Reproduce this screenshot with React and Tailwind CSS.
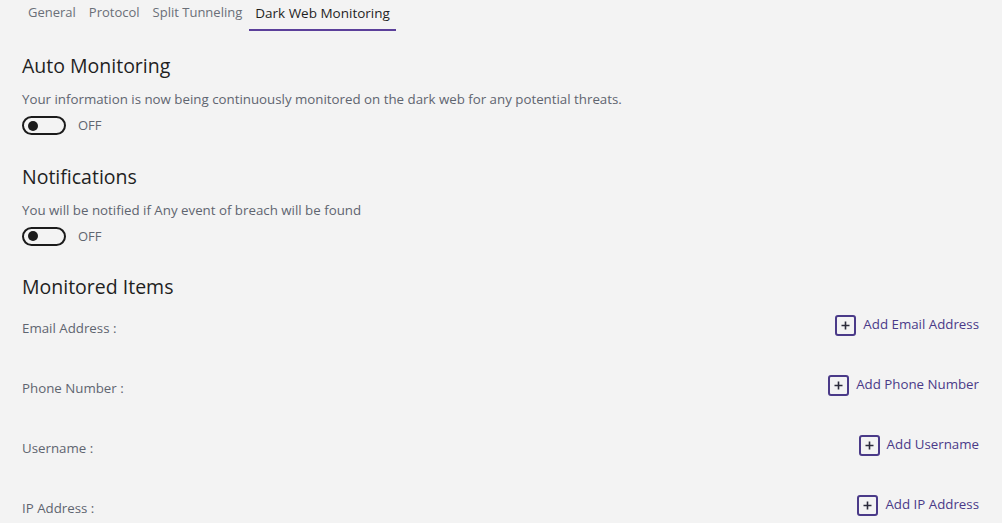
const tabs = ['General', 'Protocol', 'Split Tunneling', 'Dark Web Monitoring'];

const items = [
  { label: 'Email Address :', action: 'Add Email Address' },
  { label: 'Phone Number :', action: 'Add Phone Number' },
  { label: 'Username :', action: 'Add Username' },
  { label: 'IP Address :', action: 'Add IP Address' },
];

function Toggle() {
  return (
    <div className="flex items-center gap-3 mt-[8px]">
      <div className="w-[44px] h-[19px] rounded-full border-2 border-[#1b1b1b] flex items-center pl-[4px]">
        <div className="w-[10px] h-[10px] rounded-full bg-[#1b1b1b]" />
      </div>
      <span className="text-[13px] text-[#5f6570]">OFF</span>
    </div>
  );
}

function Section({ title, desc }) {
  return (
    <div className="mb-[27px]">
      <h2 className="text-[19.5px] text-[#1f1f1f] leading-[28px]">{title}</h2>
      <p className="text-[13.3px] text-[#5f6570] mt-[10px] leading-[18px]">{desc}</p>
      <Toggle />
    </div>
  );
}

export default function App() {
  return (
    <div
      className="w-[1002px] h-[523px] overflow-hidden bg-[#f3f3f3]"
      style={{ fontFamily: '"Open Sans", "Noto Sans", sans-serif' }}
    >
      {/* Tabs */}
      <div className="flex gap-[1px] pl-[22px] h-[31px]">
        {tabs.map((t, i) => {
          const active = i === tabs.length - 1;
          return (
            <div
              key={t}
              className={
                active
                  ? 'px-[6px] h-[31px] flex items-start pt-[3px] text-[13.5px] text-[#1f1f1f] border-b-2 border-[#5b3f9a]'
                  : 'px-[6px] h-[31px] flex items-start pt-[3px] text-[13px] text-[#6a6f78]'
              }
            >
              {t}
            </div>
          );
        })}
      </div>

      <div className="pl-[22px] pr-[23px] pt-[21px]">
        <Section
          title="Auto Monitoring"
          desc="Your information is now being continuously monitored on the dark web for any potential threats."
        />
        <Section title="Notifications" desc="You will be notified if Any event of breach will be found" />

        <h2 className="text-[19.5px] text-[#1f1f1f] leading-[28px]">Monitored Items</h2>
        <div className="mt-[4px] flex flex-col gap-[20px]">
          {items.map((it) => (
            <div key={it.label} className="flex justify-between items-center h-[40px]">
              <span className="text-[13.3px] text-[#5f6570] translate-y-[4px]">{it.label}</span>
              <button className="flex items-center gap-[7px] text-[13.3px] text-[#4a3a88]">
                <span className="w-[21px] h-[21px] rounded-[3px] border-2 border-[#4a3a88] flex items-center justify-center">
                  <svg width="9" height="9" viewBox="0 0 9 9">
                    <path d="M4.5 0.5v8M0.5 4.5h8" stroke="#2b2b3a" strokeWidth="1.6" />
                  </svg>
                </span>
                {it.action}
              </button>
            </div>
          ))}
        </div>
      </div>
    </div>
  );
}
